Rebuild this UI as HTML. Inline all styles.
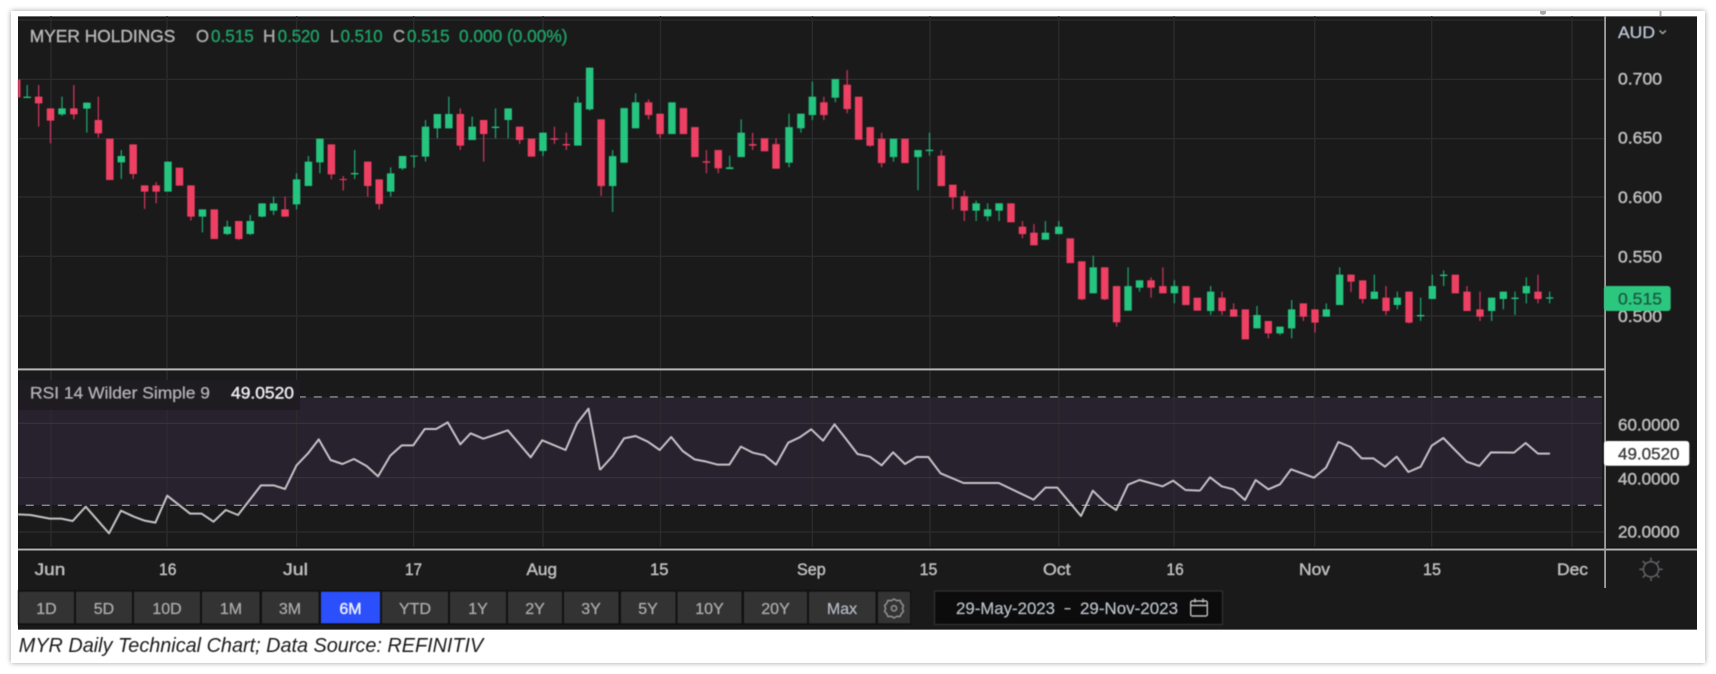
<!DOCTYPE html>
<html lang="en"><head><meta charset="utf-8"><title>MYR Daily Technical Chart</title>
<style>
html,body{margin:0;padding:0;background:#fff;width:1716px;height:674px;overflow:hidden}
svg{display:block;position:absolute;left:0;top:0}
#card{position:absolute;left:11px;top:11px;width:1694px;height:652px;background:#fff;box-shadow:0 0 5px rgba(0,0,0,.38)}
text{font-family:"Liberation Sans",sans-serif}
.b{filter:blur(.5px)}
</style></head><body>
<div id="card"></div>
<svg width="1716" height="674" viewBox="0 0 1716 674" xmlns="http://www.w3.org/2000/svg">
<!-- stray marks above chart -->
<path d="M1540 11v2.5q3 3 6 0V11z M1659.5 11h2v5h-2z" fill="#a8a8a8"/>
<!-- dark panel -->
<rect x="18" y="16" width="1679" height="613.5" fill="#1a1a1b"/>
<path d="M18 16.5H1697 M18 629.5H1697" stroke="#6e6e6e" stroke-width="1" fill="none"/>
<!-- RSI band -->
<rect x="18" y="397" width="1584" height="108" fill="#27222e"/>
<!-- gridlines -->
<g stroke="#2b2b2e" stroke-width="1.4" fill="none">
<path d="M18 20H1604 M18 79.3H1604 M18 138.7H1604 M18 197H1604 M18 256.3H1604 M18 316H1604 M18 532H1604"/>
<path d="M51 16V368 M167 16V368 M296.6 16V368 M413.7 16V368 M543 16V368 M660.5 16V368 M812.4 16V368 M930 16V368 M1058.8 16V368 M1174 16V368 M1314.7 16V368 M1431.7 16V368 M1572 16V368"/>
<path d="M51 370V547 M167 370V547 M296.6 370V547 M413.7 370V547 M543 370V547 M660.5 370V547 M812.4 370V547 M930 370V547 M1058.8 370V547 M1174 370V547 M1314.7 370V547 M1431.7 370V547 M1572 370V547"/>
</g>
<path d="M18 423.3H1602 M18 477.7H1602" stroke="#37313f" stroke-width="1.4" fill="none"/>
<!-- RSI dashes -->
<path d="M18 396.9H1602 M18 505.3H1602" stroke="#8b8b8b" stroke-width="1.4" stroke-dasharray="8 8" stroke-dashoffset="8.2" fill="none"/>
<!-- separators -->
<rect x="18" y="368.4" width="1587" height="2" fill="#b8b8b8"/>
<rect x="18" y="547.6" width="1679" height="1" fill="#050505"/>
<rect x="18" y="548.5" width="1679" height="2" fill="#b4b4b4"/>
<rect x="1604.2" y="16" width="1.8" height="572" fill="#a0a0a0"/>
<!-- RSI legend box -->
<rect x="18" y="380" width="282" height="30" fill="#1e1c21"/>
<g class="b">
<!-- candles: group 1 -->
<rect x="18" y="79.5" width="2.4" height="18" fill="#ee4063"/>
<g transform="scale(.38265 .33333)" fill="none">
<path stroke="#1f9f6b" stroke-width="3.4" d="M71 255V293 M162 290V348 M227 308V398 M317 450V537 M529 628V697 M594 662V705 M654 645V705 M685 610V652 M715 590V645 M775 520V628 M806 468V558 M836 416V520 M927 450V537 M1021 502V590 M1052 468V510 M1082 468V503 M1112 360V485 M1143 342V415 M1173 290V385 M1234 350V420 M1295 325V415 M1328 325V415 M1419 398V468 M1510 290V437 M1541 203V332"/>
<path stroke="#c6355a" stroke-width="3.4" d="M101 255V380 M132 325V430 M193 255V358 M257 290V413 M348 433V537 M378 556V627 M408 546V610 M499 556V662 M624 663V720 M745 590V650 M866 433V538 M897 528V572 M961 485V590 M991 538V628 M1203 325V450 M1264 360V485 M1358 380V432 M1449 380V432 M1480 398V450"/>
<path stroke="#25c47f" stroke-width="19.6" d="M71 290V294 M162 325V343 M227 308V326 M317 468V487 M439 485V575 M529 628V650 M594 680V702 M654 663V702 M685 610V650 M715 610V632 M775 538V613 M806 485V558 M836 416V487 M927 519V523 M1021 520V575 M1052 468V505 M1082 467V470 M1112 380V470 M1143 342V385 M1173 342V385 M1234 380V420 M1295 380V384 M1328 325V360 M1419 398V453 M1510 308V437 M1541 203V328"/>
<path stroke="#ee4063" stroke-width="19.6" d="M101 290V310 M132 325V362 M193 325V343 M257 360V400 M287 416V540 M348 433V522 M378 556V575 M408 556V575 M469 503V557 M499 556V650 M560 628V717 M624 663V717 M745 628V650 M866 433V523 M897 537V540 M961 485V558 M991 538V612 M1203 342V437 M1264 360V402 M1358 380V420 M1389 416V470 M1449 415V419 M1480 432V436"/>
</g>
<!-- candles: group 2 -->
<g transform="translate(600 40) scale(.38265 .33333)" fill="none">
<path stroke="#1f9f6b" stroke-width="3.4" d="M33 330V516 M93 160V265 M339 347V387 M369 238V351 M494 221V382 M525 221V278 M555 125V240 M615 117V187 M767 296V365 M831 330V451 M861 278V347 M983 482V543 M1013 490V543 M1043 490V543 M1164 543V599 M1199 543V582 M1289 647V760 M1380 682V812 M1410 721V755 M1501 720V790"/>
<path stroke="#c6355a" stroke-width="3.4" d="M3 238V468 M127 178V238 M157 221V295 M278 330V400 M309 330V400 M399 278V330 M460 295V386 M585 170V240 M646 90V220 M706 261V320 M736 278V382 M892 330V438 M922 434V508 M952 452V543 M1104 543V595 M1134 552V616 M1259 664V780 M1319 682V780 M1350 738V860 M1440 712V773 M1471 682V760"/>
<path stroke="#25c47f" stroke-width="19.6" d="M33 348V438 M63 204V368 M93 187V265 M188 187V282 M339 382V387 M369 278V351 M494 261V368 M525 221V265 M555 170V225 M615 117V173 M767 296V351 M831 330V351 M861 329V333 M983 490V512 M1013 508V529 M1043 490V512 M1164 578V599 M1199 560V582 M1289 682V760 M1380 738V812 M1410 721V743 M1501 738V760"/>
<path stroke="#ee4063" stroke-width="19.6" d="M3 238V438 M127 187V225 M157 221V282 M218 204V282 M248 261V351 M278 364V368 M309 330V385 M399 312V317 M430 295V334 M460 312V386 M585 187V225 M646 134V207 M676 170V299 M706 261V317 M736 296V369 M797 296V369 M892 347V438 M922 434V472 M952 469V512 M1074 490V547 M1104 560V582 M1134 578V616 M1229 595V669 M1259 664V778 M1319 682V778 M1350 738V847 M1440 721V743 M1471 738V760 M1531 738V795 M1561 773V812"/>
</g>
<!-- candles: group 3 -->
<g transform="translate(1200 0) scale(.33333 .33333)" fill="none">
<path stroke="#1f9f6b" stroke-width="3.9" d="M32 858V945 M171 918V985 M240 980V1005 M275 900V1015 M379 910V950 M419 802V915 M523 824V897 M592 875V928 M662 893V963 M697 824V897 M731 811V858 M875 893V963 M910 875V928 M945 875V945 M979 832V910 M1049 875V910"/>
<path stroke="#c6355a" stroke-width="3.9" d="M66 875V945 M101 910V950 M205 963V1015 M310 910V963 M345 928V998 M453 824V876 M488 841V910 M558 858V945 M627 875V970 M801 858V933 M840 875V963 M1014 824V910"/>
<path stroke="#25c47f" stroke-width="22" d="M32 875V933 M171 945V985 M240 980V1000 M275 928V985 M379 928V950 M419 824V915 M523 875V897 M592 893V915 M662 945V949 M697 858V897 M731 824V828 M875 893V933 M910 875V897 M945 893V897 M979 858V880 M1049 892V896"/>
<path stroke="#ee4063" stroke-width="22" d="M66 893V933 M101 928V950 M136 928V1018 M205 963V1000 M310 910V950 M345 928V968 M453 824V845 M488 841V897 M558 893V933 M627 875V968 M766 824V880 M801 875V933 M840 928V950 M1014 875V897"/>
</g>
<!-- RSI line -->
<g fill="none" stroke="#c6c3c8" stroke-linejoin="round">
<polyline vector-effect="non-scaling-stroke" stroke-width="2" transform="translate(0 360) scale(.38265 .33333)" points="47,463 80,465 130,476 160,476 190,483 224,440 285,520 316,452 350,470 378,482 406,488 437,407 497,461 527,461 558,485 590,450 622,465 682,376 715,376 745,387 775,316 805,280 833,238 864,300 895,312 925,297 958,318 988,349 1020,287 1050,256 1080,256 1110,207 1140,207 1170,187 1203,253 1230,220 1263,236 1295,224 1327,211 1387,292 1417,241 1478,270 1508,190 1538,146 1568,330"/>
<polyline vector-effect="non-scaling-stroke" stroke-width="2" transform="translate(600 370) scale(.38265 .33333)" points="0,300 33,258 63,205 93,198 125,215 156,240 186,201 216,243 247,268 278,275 308,284 338,284 368,230 399,248 430,256 460,284 492,218 522,202 552,178 583,212 613,163 643,207 673,252 705,260 736,286 766,247 797,282 827,261 858,261 890,310 950,339 1042,339 1133,389 1164,353 1195,353 1257,438 1288,362 1320,398 1349,420 1380,344 1410,330 1470,349 1498,332 1530,360 1568,362"/>
<polyline vector-effect="non-scaling-stroke" stroke-width="2" transform="translate(1200 370) scale(.33333 .33333)" points="0,362 30,322 65,349 100,358 135,390 167,330 205,358 240,343 273,298 342,323 378,293 415,216 452,231 485,265 520,265 555,290 590,260 625,306 662,290 695,227 730,204 765,240 800,275 838,288 873,247 942,248 977,219 1014,251 1050,251"/>
</g>
<!-- header text -->
<g font-size="17.5" stroke-width=".45">
<text x="29.8" y="42" fill="#b4b4b4" stroke="#b4b4b4" textLength="145.5" lengthAdjust="spacingAndGlyphs">MYER HOLDINGS</text>
<text x="196" y="42" fill="#a8a8a8" stroke="#a8a8a8" textLength="13" lengthAdjust="spacingAndGlyphs">O</text>
<text x="211" y="42" fill="#1f9d63" stroke="#1f9d63" textLength="42.7" lengthAdjust="spacingAndGlyphs">0.515</text>
<text x="263" y="42" fill="#a8a8a8" stroke="#a8a8a8" textLength="12.5" lengthAdjust="spacingAndGlyphs">H</text>
<text x="277.8" y="42" fill="#1f9d63" stroke="#1f9d63" textLength="41.7" lengthAdjust="spacingAndGlyphs">0.520</text>
<text x="330" y="42" fill="#a8a8a8" stroke="#a8a8a8" textLength="9" lengthAdjust="spacingAndGlyphs">L</text>
<text x="340.6" y="42" fill="#1f9d63" stroke="#1f9d63" textLength="42" lengthAdjust="spacingAndGlyphs">0.510</text>
<text x="393" y="42" fill="#a8a8a8" stroke="#a8a8a8" textLength="12" lengthAdjust="spacingAndGlyphs">C</text>
<text x="407" y="42" fill="#1f9d63" stroke="#1f9d63" textLength="42.6" lengthAdjust="spacingAndGlyphs">0.515</text>
<text x="459" y="42" fill="#1f9d63" stroke="#1f9d63" textLength="108.5" lengthAdjust="spacingAndGlyphs">0.000 (0.00%)</text>
</g>
<!-- RSI legend text -->
<text x="30" y="398.5" font-size="17" fill="#b2b2b2" stroke="#b2b2b2" stroke-width=".3" textLength="180" lengthAdjust="spacingAndGlyphs">RSI 14 Wilder Simple 9</text>
<text x="231" y="398.5" font-size="17" fill="#ececec" stroke="#ececec" stroke-width=".45" textLength="63" lengthAdjust="spacingAndGlyphs">49.0520</text>
<!-- right axis -->
<g font-size="17" fill="#bcbcbc" stroke="#bcbcbc" stroke-width=".5">
<text x="1618" y="84.3" textLength="44" lengthAdjust="spacingAndGlyphs">0.700</text>
<text x="1618" y="143.6" textLength="44" lengthAdjust="spacingAndGlyphs">0.650</text>
<text x="1618" y="202.9" textLength="44" lengthAdjust="spacingAndGlyphs">0.600</text>
<text x="1618" y="262.3" textLength="44" lengthAdjust="spacingAndGlyphs">0.550</text>
<text x="1618" y="322" textLength="44" lengthAdjust="spacingAndGlyphs">0.500</text>
<text x="1618" y="430.3" textLength="61.5" lengthAdjust="spacingAndGlyphs">60.0000</text>
<text x="1618" y="484.3" textLength="61.5" lengthAdjust="spacingAndGlyphs">40.0000</text>
<text x="1618" y="537.6" textLength="61.5" lengthAdjust="spacingAndGlyphs">20.0000</text>
</g>
<text x="1618" y="38" font-size="17" fill="#b9c3d0" stroke="#b9c3d0" stroke-width=".35" textLength="37" lengthAdjust="spacingAndGlyphs">AUD</text>
<path d="M1659.5 30.5l3.2 3 3.2-3" stroke="#a9a9a9" stroke-width="1.5" fill="none"/>
<rect x="1604" y="286" width="66.7" height="25" rx="3" fill="#2cc77f"/>
<text x="1618" y="304.6" font-size="17" fill="#1c5c44" stroke="#1c5c44" stroke-width=".35" textLength="44" lengthAdjust="spacingAndGlyphs">0.515</text>
<rect x="1604" y="441" width="85.3" height="24.7" rx="3" fill="#fff"/>
<text x="1618" y="459.3" font-size="17" fill="#3a3a3a" stroke="#3a3a3a" stroke-width=".3" textLength="61.5" lengthAdjust="spacingAndGlyphs">49.0520</text>
<!-- sun icon -->
<g fill="none" stroke="#5e5f63" stroke-width="1.6">
<circle cx="1651" cy="569.3" r="7.6"/>
<path d="M1651 557.6v4 M1651 577v4 M1639.3 569.3h4 M1658.7 569.3h4 M1642.7 561l2.8 2.8 M1656.5 574.8l2.8 2.8 M1642.7 577.6l2.8-2.8 M1656.5 563.8l2.8-2.8"/>
</g>
<!-- x axis -->
<g font-size="17" fill="#bdbdbd" stroke="#bdbdbd" stroke-width=".5">
<text x="34.7" y="575" textLength="30.6" lengthAdjust="spacingAndGlyphs">Jun</text>
<text x="159" y="575" textLength="17.5" lengthAdjust="spacingAndGlyphs">16</text>
<text x="283" y="575" textLength="25" lengthAdjust="spacingAndGlyphs">Jul</text>
<text x="405" y="575" textLength="17" lengthAdjust="spacingAndGlyphs">17</text>
<text x="526.5" y="575" textLength="30.5" lengthAdjust="spacingAndGlyphs">Aug</text>
<text x="650" y="575" textLength="18.5" lengthAdjust="spacingAndGlyphs">15</text>
<text x="797" y="575" textLength="28.7" lengthAdjust="spacingAndGlyphs">Sep</text>
<text x="919.6" y="575" textLength="17.7" lengthAdjust="spacingAndGlyphs">15</text>
<text x="1043" y="575" textLength="27.6" lengthAdjust="spacingAndGlyphs">Oct</text>
<text x="1166.5" y="575" textLength="17.2" lengthAdjust="spacingAndGlyphs">16</text>
<text x="1299" y="575" textLength="31" lengthAdjust="spacingAndGlyphs">Nov</text>
<text x="1423" y="575" textLength="18" lengthAdjust="spacingAndGlyphs">15</text>
<text x="1557" y="575" textLength="31" lengthAdjust="spacingAndGlyphs">Dec</text>
</g>
<!-- toolbar -->
<rect x="18" y="590" width="893" height="35" fill="#111"/>
<g fill="#333334">
<rect x="19" y="591.7" width="55" height="31.6"/><rect x="76" y="591.7" width="56" height="31.6"/><rect x="134" y="591.7" width="66" height="31.6"/><rect x="202" y="591.7" width="57.5" height="31.6"/><rect x="262" y="591.7" width="56.5" height="31.6"/><rect x="382" y="591.7" width="66" height="31.6"/><rect x="450" y="591.7" width="56" height="31.6"/><rect x="508" y="591.7" width="54" height="31.6"/><rect x="564" y="591.7" width="54.5" height="31.6"/><rect x="621" y="591.7" width="54.5" height="31.6"/><rect x="677.5" y="591.7" width="64" height="31.6"/><rect x="744" y="591.7" width="63" height="31.6"/><rect x="809" y="591.7" width="66.5" height="31.6"/><rect x="878" y="591.7" width="32" height="31.6"/>
</g>
<rect x="321" y="591.7" width="59" height="31.6" fill="#2b4ffb"/>
<g font-size="16" fill="#a9a9a9" stroke="#a9a9a9" stroke-width=".3" text-anchor="middle">
<text x="46.5" y="614">1D</text><text x="104" y="614">5D</text><text x="167" y="614">10D</text><text x="231" y="614">1M</text><text x="290" y="614">3M</text>
<text x="350.5" y="614" fill="#e8ebff" stroke="#e8ebff" stroke-width=".5">6M</text>
<text x="415" y="614">YTD</text><text x="478" y="614">1Y</text><text x="535" y="614">2Y</text><text x="591" y="614">3Y</text><text x="648" y="614">5Y</text><text x="709.5" y="614">10Y</text><text x="775.5" y="614">20Y</text><text x="842" y="614" fill="#b0b6bf" stroke="#b0b6bf">Max</text>
</g>
<!-- gear icon -->
<g fill="none" stroke="#8e8e8e" stroke-width="1.6">
<path d="M894 599.5l2.8 1.6 3.2-.2 1.4 2.9 2 2.2-1 2.9 1 2.9-2 2.2-1.4 2.9-3.2-.2-2.8 1.6-2.8-1.6-3.2.2-1.4-2.9-2-2.2 1-2.9-1-2.9 2-2.2 1.4-2.9 3.2.2z" transform="translate(0 -.4)"/>
<circle cx="894" cy="608.3" r="2.6"/>
</g>
<!-- date range -->
<rect x="934.5" y="591" width="288" height="33.5" fill="#0c0c0c" stroke="#333" stroke-width="1.2"/>
<text x="956" y="614" font-size="17" fill="#b7bdc6" stroke="#b7bdc6" stroke-width=".25" textLength="99" lengthAdjust="spacingAndGlyphs">29-May-2023</text>
<rect x="1064.5" y="608" width="6" height="1.5" fill="#b0b0b0"/>
<text x="1080" y="614" font-size="17" fill="#b7bdc6" stroke="#b7bdc6" stroke-width=".25" textLength="98" lengthAdjust="spacingAndGlyphs">29-Nov-2023</text>
<g fill="none" stroke="#bdbdbd" stroke-width="1.4">
<rect x="1190.7" y="601" width="16.6" height="15" rx="1.5"/>
<path d="M1191 605.5h16 M1195 598.5v4 M1203 598.5v4"/>
</g>
<!-- caption -->
<text x="18.8" y="652" font-size="20" font-style="italic" fill="#1a1a1a" textLength="464.5" lengthAdjust="spacingAndGlyphs">MYR Daily Technical Chart; Data Source: REFINITIV</text>
</g>
</svg>
</body></html>
